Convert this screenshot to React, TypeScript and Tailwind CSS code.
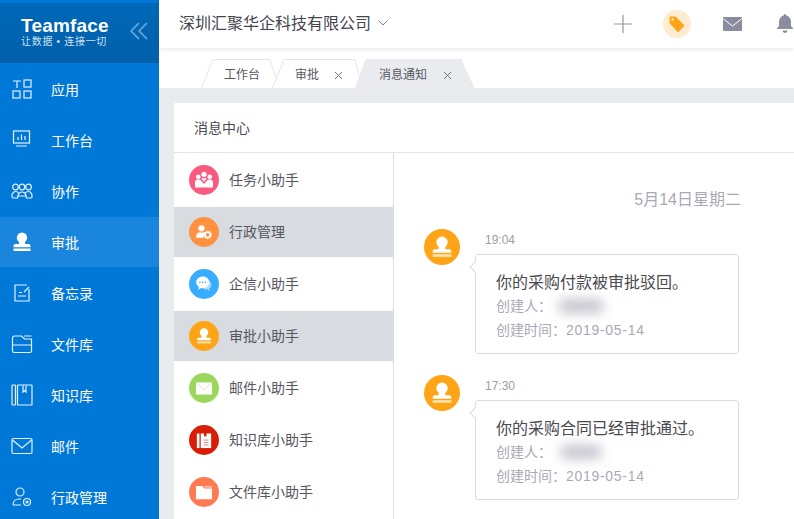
import { ReactNode } from 'react';

const FONT = "font-['Liberation_Sans','Noto_Sans_CJK_SC',sans-serif]";

// line icons of the sidebar, 22x22, white stroke
const navIcons: Record<string, ReactNode> = {
  apps: (
    <>
      <path d="M2 3h8M6 3v7" />
      <rect x="13" y="2" width="7" height="7" />
      <rect x="2" y="13" width="7" height="7" />
      <rect x="13" y="13" width="7" height="7" />
    </>
  ),
  desk: (
    <>
      <rect x="2.500" y="2" width="16" height="12" />
      <path d="M7 11V8M10.500 11V5.500M14 11V7M5 17h11" />
    </>
  ),
  team: (
    <>
      <circle cx="4.500" cy="7" r="2.800" />
      <circle cx="11" cy="7" r="2.800" />
      <circle cx="17.500" cy="7" r="2.800" />
      <path d="M1.500 18c-1.500-3 .5-6.500 3-6.500 1.500 0 2.500.5 3 1.500M20.500 18c1.500-3-.5-6.500-3-6.500-1.500 0-2.500.5-3 1.500M7 16c0-2 2-4 4-4s4 2 4 4" />
      <path d="M1.500 18h5l.5-2h8l.5 2h5" />
    </>
  ),
  stamp: null,
  memo: (
    <>
      <path d="M16 3H4v16h14V7" />
      <path d="M7 14h8M8 10.500h3M13 10l5-5" />
    </>
  ),
  folder: (
    <>
      <path d="M1.500 5a2 2 0 0 1 2-2h7l3 3h7v12a1.500 1.500 0 0 1-1.500 1.500H3a1.500 1.500 0 0 1-1.500-1.500z" />
      <path d="M1.500 12h19M13 3h7.500" />
    </>
  ),
  book: (
    <>
      <rect x="1" y="1" width="3.500" height="20" rx=".5" />
      <rect x="6.500" y="1" width="14.500" height="20" rx=".5" />
      <path d="M12 1.500V8l1.500-1.500L15 8V1.500" />
    </>
  ),
  mail: (
    <>
      <rect x="1" y="3.500" width="20" height="15" rx="1.500" />
      <path d="M1.500 5l9.500 8 9.500-8" />
    </>
  ),
  admin: (
    <>
      <circle cx="9" cy="6" r="4" />
      <path d="M2 19c0-4 3-6 6-6h2M2 19h8" />
      <circle cx="16" cy="16" r="3.500" />
      <circle cx="16" cy="16" r="1" />
    </>
  ),
};

const nav = [
  { label: '应用', icon: 'apps' },
  { label: '工作台', icon: 'desk' },
  { label: '协作', icon: 'team' },
  { label: '审批', icon: 'stamp', active: true },
  { label: '备忘录', icon: 'memo' },
  { label: '文件库', icon: 'folder' },
  { label: '知识库', icon: 'book' },
  { label: '邮件', icon: 'mail' },
  { label: '行政管理', icon: 'admin' },
];

function Stamp({ size = 20, color = 'white', bar = 'white' }: { size?: number; color?: string; bar?: string }) {
  return (
    <svg width={size} height={size} viewBox="0 0 20 20">
      <path
        fill={color}
        d="M10 .500a5.200 5.200 0 0 0-5.200 5.200c0 2 1.300 3.100 2.100 4.300.500.800.300 1.500-.400 2H3.300C2.500 12 1.500 12.900 1.500 14v1.300h17V14c0-1.100-1-2-1.800-2h-3.200c-.7-.5-.9-1.200-.4-2 .8-1.200 2.100-2.300 2.100-4.300A5.200 5.200 0 0 0 10 .500z"
      />
      <rect x="1.500" y="16.500" width="17" height="2.500" fill={bar} />
    </svg>
  );
}

function NavItem({ label, icon, active }: { label: string; icon: string; active?: boolean }) {
  return (
    <div className={`mb-px flex h-[50px] shrink-0 items-center pl-[11px] text-sm text-white ${active ? 'bg-[#1a85dc]' : ''}`}>
      <span className="flex w-[22px] justify-center">
        {icon === 'stamp' ? (
          <Stamp size={20} />
        ) : (
          <svg width="22" height="22" viewBox="0 0 22 22" fill="none" stroke="#e4f1fc" strokeWidth="1.200">
            {navIcons[icon]}
          </svg>
        )}
      </span>
      <span className="ml-[18px] mt-[2px]">{label}</span>
    </div>
  );
}

function Tab({ width, overlap, path, fill, children }: { width: number; overlap?: boolean; path: string; fill?: boolean; children: ReactNode }) {
  return (
    <div className={`relative flex h-[29px] items-center text-xs text-[#55565f] ${overlap ? '-ml-[7px]' : ''}`} style={{ width }}>
      <svg className="absolute inset-0" width={width} height="29" viewBox={`0 0 ${width} 29`}>
        <path d={path} fill={fill ? '#e9ebef' : 'white'} stroke={fill ? '#e9ebef' : '#e4e5e9'} />
      </svg>
      <span className="relative mt-[3px] flex items-center">{children}</span>
    </div>
  );
}

function Close() {
  return (
    <svg className="block" width="9" height="9" viewBox="0 0 9 9" stroke="#73758a" strokeWidth="1">
      <path d="M1 1l7 7M8 1l-7 7" />
    </svg>
  );
}

const helpers: { label: string; bg: string; active?: boolean; icon: ReactNode }[] = [
  {
    label: '任务小助手',
    bg: 'bg-[#fb5a80]',
    icon: (
      <svg width="22" height="22" viewBox="0 0 22 22" fill="white">
        <circle cx="11" cy="4" r="3.200" />
        <circle cx="4" cy="7" r="2.800" />
        <circle cx="18" cy="7" r="2.800" />
        <path d="M0 20v-6c0-2 1.500-3.500 3-3.500h3L11 16l5-5.500h3c1.500 0 3 1.500 3 3.500v6z" />
        <path d="M7.500 9h7L11 13z" />
      </svg>
    ),
  },
  {
    label: '行政管理',
    bg: 'bg-[#ff9140]',
    active: true,
    icon: (
      <svg width="20" height="18" viewBox="0 0 20 18">
        <circle cx="7" cy="4.500" r="3.800" fill="white" />
        <path d="M0 16l1-4c.4-1.500 1.500-2.500 3-2.500h6c1 0 1.500.5 1.500 1.500L9 16z" fill="white" />
        <circle cx="14.500" cy="12.500" r="3.200" fill="none" stroke="white" strokeWidth="2" />
        <circle cx="14.500" cy="12.500" r="4.600" fill="none" stroke="white" strokeWidth="1.400" strokeDasharray="1.600 1.600" />
      </svg>
    ),
  },
  {
    label: '企信小助手',
    bg: 'bg-[#38adff]',
    icon: (
      <svg width="20" height="20" viewBox="0 0 20 20">
        <path d="M12 5c4 0 7 2.500 7 6 0 2-1 3.500-2.500 4.500l.5 3-3-2c-3.500.5-7-1-7-5.500z" fill="#a9dcff" />
        <path d="M8.500 1C4 1 .5 4 .5 8c0 2.400 1.300 4.400 3.200 5.700L3 17l3.500-2c.7.100 1.300.2 2 .2 4.500 0 8-3.200 8-7.200S13 1 8.500 1z" fill="white" />
        <circle cx="5" cy="8" r="1" fill="#38adff" />
        <circle cx="8.500" cy="8" r="1" fill="#38adff" />
        <circle cx="12" cy="8" r="1" fill="#38adff" />
      </svg>
    ),
  },
  { label: '审批小助手', bg: 'bg-[#ffa416]', active: true, icon: <Stamp size={20} bar="#ffe2b0" /> },
  {
    label: '邮件小助手',
    bg: 'bg-[#9bd75c]',
    icon: (
      <svg width="20" height="15" viewBox="0 0 20 15">
        <rect width="20" height="15" rx="1" fill="white" />
        <path d="M.5 1L10 9l9.500-8" fill="none" stroke="#c5e8a2" strokeWidth="1" />
      </svg>
    ),
  },
  {
    label: '知识库小助手',
    bg: 'bg-[#d91e08]',
    icon: (
      <svg width="18" height="19" viewBox="0 0 18 19">
        <rect x="0" y="1" width="3.500" height="18" fill="white" />
        <path d="M5 1h4v4l1.500-1L12 5V1h6v18H5z" fill="white" />
        <path d="M8.500 9h6M8.500 12h6M8.500 15h6" stroke="#e5604f" strokeWidth="1" />
      </svg>
    ),
  },
  {
    label: '文件库小助手',
    bg: 'bg-[#ff7a50]',
    icon: (
      <svg width="20" height="17" viewBox="0 0 20 17">
        <path d="M0 2a1.500 1.500 0 0 1 1.500-1.500H8L10.500 3.500H20v12a1.500 1.500 0 0 1-1.500 1.500h-17A1.500 1.500 0 0 1 0 15.500z" fill="white" />
        <path d="M10 1h10v1.500H11z" fill="#ffd9cc" />
      </svg>
    ),
  },
];

function Message({ time, title, blur }: { time: string; title: string; blur: string }) {
  return (
    <div className="flex">
      <div className="flex h-9 w-9 shrink-0 items-center justify-center rounded-full bg-[#ffa416]">
        <Stamp size={22} bar="#ffe2b0" />
      </div>
      <div className="ml-[15px] w-[264px]">
        <div className="ml-[10px] h-[25px] pt-[3px] text-xs leading-4 text-[#9c9ca8]">{time}</div>
        <div className="relative h-[100px] rounded-[3px] border border-[#dcdcdf] pl-5 pt-4 text-sm text-[#a9a9b5]">
          <span className="absolute -left-[5px] top-[8px] h-2 w-2 rotate-45 border-b border-l border-[#dcdcdf] bg-white" />
          <div className="h-[23px] text-base leading-6 text-[#4a4a52]">{title}</div>
          <div className="flex h-[23px] items-center">
            创建人：
            <span className={`h-[14px] rounded-full bg-[#c4c4cd] blur-[6px] ${blur}`} />
          </div>
          <div className="h-[27px] leading-[27px]">
            创建时间：<span className="tracking-[0.7px]">2019-05-14</span>
          </div>
        </div>
      </div>
    </div>
  );
}

export default function App() {
  return (
    <div className={`flex h-[519px] w-[794px] overflow-hidden bg-[#e9ebef] ${FONT}`}>
      <aside className="flex w-[159px] shrink-0 flex-col bg-[#0078d7] pt-[3px]">
        <div className="relative h-[60px] shrink-0 bg-gradient-to-b from-[#0069b9] to-[#005fa9] pl-[21px] pt-[12px] text-white">
          <div className="text-[19px] font-bold leading-[22px] tracking-[0.2px]">Teamface</div>
          <div className="-mt-px whitespace-nowrap text-[10px] leading-[12px] tracking-[0.7px] text-[#cfe0f0]">让数据 • 连接一切</div>
          <svg className="absolute left-[130px] top-[19px]" width="18" height="18" viewBox="0 0 18 18" fill="none" stroke="#5c9fd6" strokeWidth="1.800">
            <path d="M9 1L1 9l8 8M17 1L9 9l8 8" />
          </svg>
        </div>
        <nav className="flex flex-col pt-[1px]">
          {nav.map((n) => (
            <NavItem key={n.label} {...n} />
          ))}
        </nav>
      </aside>

      <main className="flex min-w-0 flex-1 flex-col">
        <header className="relative z-10 flex h-[48px] shrink-0 items-center bg-white pl-5 shadow-[0_1px_4px_rgba(30,40,70,0.12)]">
          <span className="whitespace-nowrap text-base text-[#44454d]">深圳汇聚华企科技有限公司</span>
          <svg className="ml-[7px] -mt-[2px]" width="10" height="6" viewBox="0 0 10 6" fill="none" stroke="#7d8096" strokeWidth="1">
            <path d="M.5.500L5 5 9.500.500" />
          </svg>
          <div className="ml-[226px] flex items-center">
            <svg width="18" height="18" viewBox="0 0 18 18" stroke="#9396a8" strokeWidth="1.200">
              <path d="M9 0v18M0 9h18" />
            </svg>
            <span className="ml-[31px] flex h-7 w-7 items-center justify-center rounded-full bg-[#ffecd0]">
              <svg width="16" height="17" viewBox="0 0 16 17" fill="#ffa416">
                <path d="M1 0.500h5.500L15.500 9.500 9 16.500 0.500 7V1z" />
                <circle cx="3.500" cy="3.500" r="1.200" fill="#ffecd0" />
              </svg>
            </span>
            <svg className="ml-[32px]" width="19" height="14" viewBox="0 0 19 14">
              <rect width="19" height="14" rx="1" fill="#8a8d9f" />
              <path d="M.5 2L9.500 9 18.500 2" fill="none" stroke="white" strokeWidth="1" />
            </svg>
            <svg className="ml-[34px] shrink-0" width="18" height="20" viewBox="0 0 18 20" fill="#8a8d9f">
              <path d="M9 0a2 2 0 0 1 1.500 1.500C13.500 2.300 15 5 15 8v4l2.500 3H.500L3 12V8c0-3 1.500-5.700 4.500-6.500A2 2 0 0 1 9 0z" />
              <path d="M6.500 16.500h5a2.500 2.500 0 0 1-5 0z" />
            </svg>
          </div>
        </header>

        <div className="flex h-[40px] shrink-0 items-end bg-white pl-[42px]">
          <Tab width={78} path="M.5 29L12 .5H69L78 29">
            <span className="ml-[23px]">工作台</span>
          </Tab>
          <Tab width={90} overlap path="M.5 29L12 .5H83L90 29">
            <span className="ml-[23px]">审批</span>
            <span className="ml-[15px]"><Close /></span>
          </Tab>
          <Tab width={119} overlap fill path="M.5 29L11 .5H106L119 29">
            <span className="ml-[24px]">消息通知</span>
            <span className="ml-[16px]"><Close /></span>
          </Tab>
        </div>

        <div className="min-h-0 flex-1 pl-[15px] pt-[15px]">
          <section className="flex h-full flex-col bg-white">
            <div className="flex h-[50px] shrink-0 items-center border-b border-[#e4e5e9] pl-5 text-sm text-[#4a4a52]">消息中心</div>
            <div className="flex min-h-0 flex-1">
              <ul className="w-[220px] shrink-0 border-r border-[#dcdde1] pt-[2px]">
                {helpers.map((h) => (
                  <li key={h.label} className={`mb-[2px] flex h-[50px] items-center pl-[15px] text-sm text-[#55565f] ${h.active ? 'bg-[#d8dce0]' : ''}`}>
                    <span className={`flex h-[30px] w-[30px] items-center justify-center overflow-hidden rounded-full ${h.bg}`}>
                      <span className="flex scale-[0.82] items-center justify-center">{h.icon}</span>
                    </span>
                    <span className="ml-[10px]">{h.label}</span>
                  </li>
                ))}
              </ul>
              <div className="min-w-0 flex-1 pl-[30px]">
                <div className="h-[76px] pr-[53px] pt-[35px] text-right text-base leading-[24px] text-[#a9a9b5]">5月14日星期二</div>
                <Message time="19:04" title="你的采购付款被审批驳回。" blur="ml-[6px] w-[46px]" />
                <div className="h-[21px]" />
                <Message time="17:30" title="你的采购合同已经审批通过。" blur="ml-[8px] w-[42px]" />
              </div>
            </div>
          </section>
        </div>
      </main>
    </div>
  );
}
